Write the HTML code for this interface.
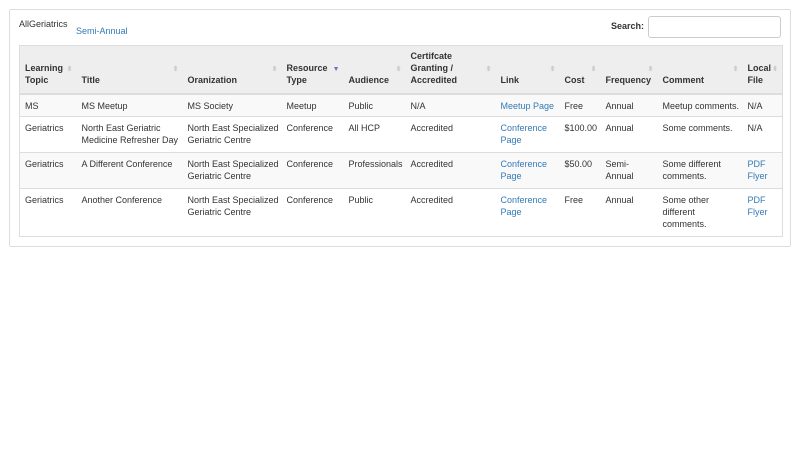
<!DOCTYPE html>
<html><head><style>
*{box-sizing:border-box;margin:0;padding:0}
body{width:800px;height:450px;background:#fff;font-family:"Liberation Sans",sans-serif;font-size:9px;color:#333;position:relative;overflow:hidden}
.panel{position:absolute;left:9px;top:9px;width:782px;height:238px;border:1px solid #ddd;border-radius:2px}
.t1{position:absolute;left:19px;top:19px;font-size:9px}
.t2{position:absolute;left:76px;top:26px;color:#337ab7;font-size:9px}
.sl{position:absolute;left:611px;top:21px;font-weight:bold}
.si{position:absolute;left:648px;top:16px;width:133px;height:22px;border:1px solid #ccc;border-radius:3px}
table{position:absolute;left:19px;top:45px;width:763px;border-collapse:collapse;table-layout:fixed;border:1px solid #ddd;line-height:12px}
th,td{white-space:nowrap;overflow:visible}
th{background:#eee;text-align:left;vertical-align:bottom;padding:0 5px 7px;height:48px;border-bottom:2px solid #ddd;position:relative;font-weight:bold}
th i{position:absolute;right:4px;top:20px;color:#ccc;font-style:normal;font-size:7px;line-height:7px}
th i.a{color:#7a72b8}
td{vertical-align:top;padding:5px 5px 0;border-top:1px solid #ddd}
tr.o td{background:#f9f9f9}
a{color:#337ab7;text-decoration:none}
</style></head><body>
<div class="panel"></div>
<div class="t1">AllGeriatrics</div>
<div class="t2">Semi-Annual</div>
<div class="sl">Search:</div>
<div class="si"></div>
<table>
<colgroup><col style="width:57px"><col style="width:106px"><col style="width:99px"><col style="width:62px"><col style="width:62px"><col style="width:90px"><col style="width:64px"><col style="width:41px"><col style="width:57px"><col style="width:85px"><col style="width:40px"></colgroup>
<tr><th>Learning<br>Topic<i>⬍</i></th><th>Title<i>⬍</i></th><th>Oranization<i>⬍</i></th><th>Resource<br>Type<i class="a">▼</i></th><th>Audience<i>⬍</i></th><th>Certifcate<br>Granting /<br>Accredited<i>⬍</i></th><th>Link<i>⬍</i></th><th>Cost<i>⬍</i></th><th>Frequency<i>⬍</i></th><th>Comment<i>⬍</i></th><th>Local<br>File<i>⬍</i></th></tr>
<tr class="o" style="height:23px"><td>MS</td><td>MS Meetup</td><td>MS Society</td><td>Meetup</td><td>Public</td><td>N/A</td><td><a>Meetup Page</a></td><td>Free</td><td>Annual</td><td>Meetup comments.</td><td>N/A</td></tr>
<tr style="height:36px"><td>Geriatrics</td><td>North East Geriatric<br>Medicine Refresher Day</td><td>North East Specialized<br>Geriatric Centre</td><td>Conference</td><td>All HCP</td><td>Accredited</td><td><a>Conference<br>Page</a></td><td>$100.00</td><td>Annual</td><td>Some comments.</td><td>N/A</td></tr>
<tr class="o" style="height:36px"><td>Geriatrics</td><td>A Different Conference</td><td>North East Specialized<br>Geriatric Centre</td><td>Conference</td><td>Professionals</td><td>Accredited</td><td><a>Conference<br>Page</a></td><td>$50.00</td><td>Semi-<br>Annual</td><td>Some different<br>comments.</td><td><a>PDF<br>Flyer</a></td></tr>
<tr style="height:48px"><td>Geriatrics</td><td>Another Conference</td><td>North East Specialized<br>Geriatric Centre</td><td>Conference</td><td>Public</td><td>Accredited</td><td><a>Conference<br>Page</a></td><td>Free</td><td>Annual</td><td>Some other<br>different<br>comments.</td><td><a>PDF<br>Flyer</a></td></tr>
</table>
</body></html>
